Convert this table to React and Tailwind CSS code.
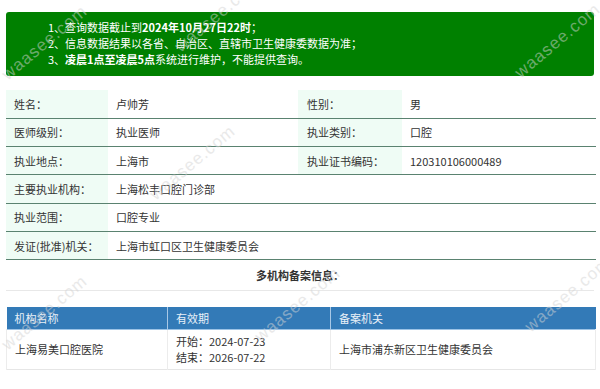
import React from "react";

const info = [
  [["姓名：", "卢帅芳"], ["性别：", "男"]],
  [["医师级别：", "执业医师"], ["执业类别：", "口腔"]],
  [["执业地点：", "上海市"], ["执业证书编码：", "120310106000489"]],
  [["主要执业机构：", "上海松丰口腔门诊部"]],
  [["执业范围：", "口腔专业"]],
  [["发证(批准)机关：", "上海市虹口区卫生健康委员会"]],
];

const marks = [
  { left: -8, top: 30 },
  { left: 165, top: 2 },
  { left: 505, top: 28 },
  { left: 140, top: 150 },
  { left: 245, top: 292 },
  { left: 515, top: 282 },
  { left: -8, top: 300 },
];

function App() {
  return (
    <div
      className="relative w-[600px] h-[389px] overflow-hidden bg-white text-[11px] text-[#333]"
      style={{ fontFamily: '"Noto Sans CJK SC", "Noto Sans", sans-serif' }}
    >
      <div className="pt-3 px-[6px]">
        {/* notice */}
        <div className="h-16 rounded-[3px] bg-[#008000] text-white pl-[42px] pt-[7px] leading-4">
          <p>1、查询数据截止到<b>2024年10月27日22时</b>；</p>
          <p>2、信息数据结果以各省、自治区、直辖市卫生健康委数据为准；</p>
          <p>3、<b>凌晨1点至凌晨5点</b>系统进行维护，不能提供查询。</p>
        </div>

        {/* doctor info */}
        <table className="mt-[14px] w-[590px] table-fixed border-collapse">
          <colgroup>
            <col className="w-[102px]" />
            <col className="w-[190px]" />
            <col className="w-[104px]" />
            <col className="w-[194px]" />
          </colgroup>
          <tbody>
            {info.map((row, i) => (
              <tr key={i} className="h-[28.33px] border-b border-[#5a8270]">
                <td className="bg-[#effcf5] pl-2">{row[0][0]}</td>
                {row.length > 1 ? (
                  <>
                    <td className="pl-2">{row[0][1]}</td>
                    <td className="bg-[#effcf5] pl-[9px]">{row[1][0]}</td>
                    <td className="pl-2">{row[1][1]}</td>
                  </>
                ) : (
                  <td colSpan="3" className="pl-2">{row[0][1]}</td>
                )}
              </tr>
            ))}
          </tbody>
        </table>

        <div className="h-[31px] flex items-center justify-center font-bold border-b border-[#e8e8e8]">
          多机构备案信息：
        </div>

        {/* registrations */}
        <table className="mt-4 w-[590px] table-fixed border-collapse">
          <colgroup>
            <col className="w-[161px]" />
            <col className="w-[163px]" />
            <col />
          </colgroup>
          <thead>
            <tr className="h-[22px] bg-[#337ab7] text-[#e8f0f8] text-left border-b border-[#9cc3e6]">
              <th className="font-normal pl-2 border-r border-[#a8c8e6]">机构名称</th>
              <th className="font-normal pl-2 border-r border-[#a8c8e6]">有效期</th>
              <th className="font-normal pl-2">备案机关</th>
            </tr>
          </thead>
          <tbody>
            <tr className="h-10 border-b border-[#e6e6e6]">
              <td className="pl-2 border-l border-[#ececec]">上海易美口腔医院</td>
              <td className="pl-2 border-l border-[#ececec] leading-4">
                <div>开始：2024-07-23</div>
                <div>结束：2026-07-22</div>
              </td>
              <td className="pl-2 border-l border-r border-[#ececec]">上海市浦东新区卫生健康委员会</td>
            </tr>
          </tbody>
        </table>
      </div>

      {/* watermark */}
      {marks.map((m, i) => (
        <div
          key={i}
          className="absolute -rotate-[40deg] text-[17px] tracking-[1px] text-[#d4d4d4] opacity-50 pointer-events-none select-none"
          style={{ left: m.left, top: m.top, fontFamily: '"Liberation Sans", sans-serif' }}
        >
          waasee.com
        </div>
      ))}
    </div>
  );
}

export default App;
